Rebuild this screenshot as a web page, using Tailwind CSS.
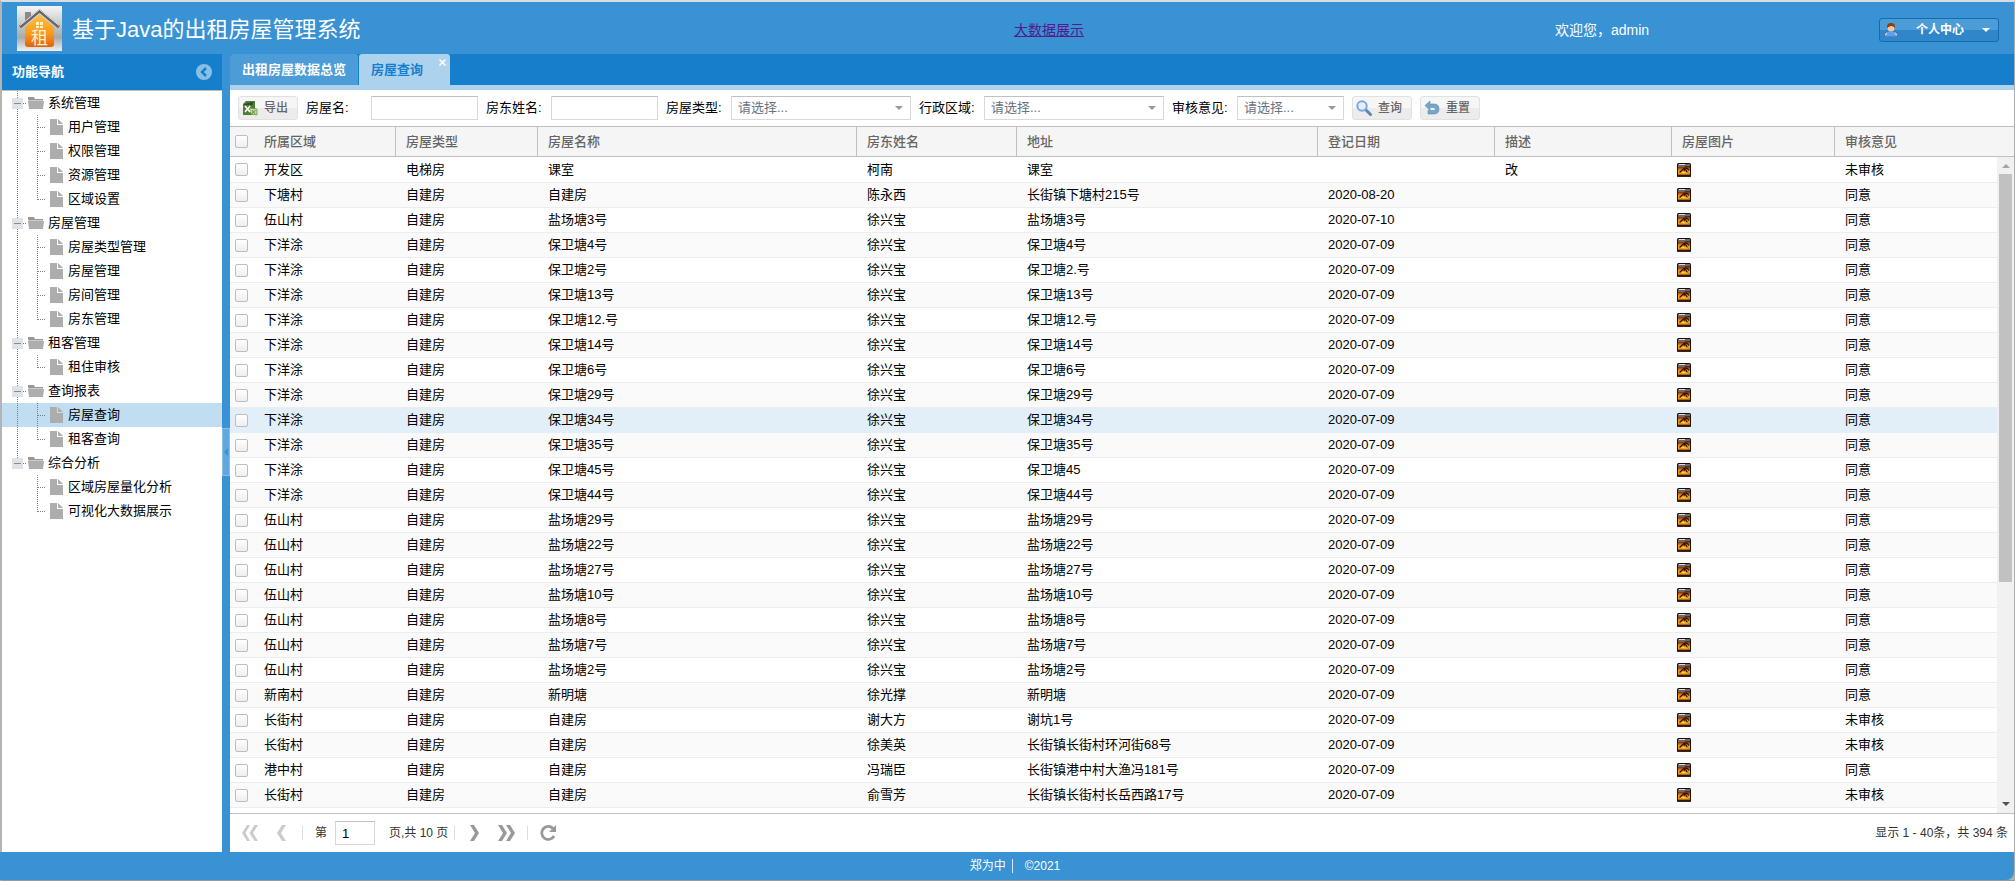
<!DOCTYPE html>
<html lang="zh-CN">
<head>
<meta charset="utf-8">
<title>基于Java的出租房屋管理系统</title>
<script src="https://cdn.jsdelivr.net/npm/@tailwindcss/browser@4"></script>
</head>
<body class="h-screen overflow-hidden bg-[#e3e3e3] font-['Liberation_Sans','Noto_Sans_CJK_SC',sans-serif] text-[13px] leading-4 text-black">
<svg class="absolute size-0" aria-hidden="true">
  <defs>
    <linearGradient id="g-logo" x1="0" y1="0" x2="0" y2="1"><stop offset="0" stop-color="#f5f5f5"/><stop offset=".7" stop-color="#a9a9a9"/><stop offset="1" stop-color="#f0f0f0"/></linearGradient>
    <linearGradient id="g-house" x1="0" y1="0" x2="0" y2="1"><stop offset="0" stop-color="#ffc04a"/><stop offset=".6" stop-color="#f79a1c"/><stop offset="1" stop-color="#e0620a"/></linearGradient>
    <linearGradient id="g-pic" x1="0" y1="0" x2="0" y2="1"><stop offset="0" stop-color="#7a2c08"/><stop offset=".4" stop-color="#f08a10"/><stop offset=".75" stop-color="#ffb01a"/><stop offset="1" stop-color="#a8480a"/></linearGradient>
  </defs>
  <symbol id="i-pic" viewBox="0 0 14 14">
    <rect x="0" y="0" width="14" height="14" rx="1.5" fill="#1c0f0a"/>
    <rect x="1" y="1" width="12" height="3" fill="#6f6a67"/><path d="M2 1h6v1H2z" fill="#dedbd8"/><path d="M8 3h5v2H7z" fill="#3d3734"/>
    <rect x="1" y="4" width="12" height="8" fill="url(#g-pic)"/>
    <path d="M2.500 9.500 7 5.500M6 10.500l2-4.500M7 5.500c2-1 4 0 5 2M8.500 6.500l2.500 4" stroke="#2a0f04" stroke-width="1.200" fill="none"/>
    <path d="M4.500 10l3-2.500v3.500zM9 10l1.500-1 .5 2z" fill="#ffe14d"/>
    <path d="M0 12.500h14v.500q0 1-1 1H1q-1 0-1-1z" fill="#3b2318"/>
  </symbol>
  <symbol id="i-folder" viewBox="0 0 16 12"><path d="M0 0h6l1 2h8v1.500H0z" fill="#989898"/><path d="M0 4h16l-1 8H1z" fill="#adadad"/></symbol>
  <symbol id="i-file" viewBox="0 0 13 16"><path d="M0 0h7v6h6v10H0z" fill="#adadad"/><path d="M8 0l5 5H8z" fill="#adadad"/></symbol>
  <symbol id="i-down" viewBox="0 0 8 4"><path d="M0 0h8L4 4z" fill="currentColor"/></symbol>
</svg>

<div class="flex h-full flex-col border-t-2 border-r border-b border-l-2 border-t-[#d7dde2] border-r-[#a9adb1] border-b-[#999] border-l-[#b4b4b4]">
  <header class="grid h-[52px] shrink-0 grid-cols-[1012fr_541fr_324fr_120px] items-center bg-[#3892d4] pr-[15px]">
    <div class="flex items-center gap-[10px] pl-[15px]">
      <svg class="size-[45px]" viewBox="0 0 45 45">
        <rect width="45" height="45" fill="url(#g-logo)"/>
        <path d="M8 6h6v6l-6 5z" fill="#8a8a8a"/>
        <path d="M8 21 22.500 8 37 21v17q0 3-3 3H11q-3 0-3-3z" fill="url(#g-house)"/>
        <path d="M3 21 22.500 5 42 21" fill="none" stroke="#666" stroke-width="3"/>
        <path d="M3 19.500 22.500 3.500 42 19.500" fill="none" stroke="#e8e8e8" stroke-width="1"/>
        <path d="M19 16h3v3h-3zM23 16h3v3h-3zM19 20h3v2h-3zM23 20h3v2h-3z" fill="#fff3c4"/>
        <text x="14" y="38" font-size="17" fill="#fff0d8" font-family="Noto Sans CJK SC">租</text>
      </svg>
      <h1 class="pt-1 text-[22px] leading-7 text-white">基于Java的出租房屋管理系统</h1>
    </div>
    <div class="pt-1"><a href="#" class="text-sm text-[#551a8b] underline">大数据展示</a></div>
    <div class="pt-1 text-sm text-white">欢迎您，admin</div>
    <button class="mt-1 flex h-6 items-center rounded-[3px] border border-[#126daf] bg-linear-to-b from-[#4b9cd7] from-50% to-[#3086c9] to-50% px-1 text-xs font-bold text-white">
      <svg class="size-[14px]" viewBox="0 0 14 14"><path d="M0 14q0-5 4-6h6q4 1 4 6z" fill="#5aa2ef" stroke="#2a5fb0" stroke-width=".800"/><path d="M1 12l2-2M13 12l-2-2" stroke="#f3c094" stroke-width="1.500"/><circle cx="7" cy="5" r="3.500" fill="#f6c79b"/><path d="M3 5q-.5-5 4-5t4 5Q9 2.500 7 3T3 5z" fill="#8b3d12"/></svg>
      <span class="flex-1 text-center">个人中心</span>
      <svg class="mr-1 h-1 w-2"><use href="#i-down"/></svg>
    </button>
  </header>

  <div class="flex min-h-0 flex-1">
    <aside class="flex w-[220px] shrink-0 flex-col bg-white">
      <div class="flex h-9 shrink-0 items-center justify-between bg-[#157fcc] px-[10px] font-bold text-white">
        <h2>功能导航</h2>
        <button aria-label="收起"><svg class="size-4" viewBox="0 0 16 16"><circle cx="8" cy="8" r="8" fill="#8abfe5"/><path d="M10 4 6 8l4 4" fill="none" stroke="#157fcc" stroke-width="2.500"/></svg></button>
      </div>
      <nav id="tree" class="border-t border-[#c0c0c0]"></nav>
    </aside>
    <div class="flex w-2 shrink-0 flex-col bg-[#3892d4] pt-[374px]">
      <button aria-label="折叠导航" class="flex h-12 w-2 items-center justify-center border border-[#88bee5] bg-[#60a8dd]"><svg class="h-2 w-1" viewBox="0 0 4 8"><path d="M4 0v8L0 4z" fill="#3892d4"/></svg></button>
    </div>

    <main class="flex min-w-0 flex-1 flex-col bg-white">
      <div class="flex h-9 shrink-0 gap-px border-b-[5px] border-[#add2ed] bg-[#157fcc] font-bold">
        <button class="rounded-t-[3px] bg-[#4b9cd7] px-3 text-white">出租房屋数据总览</button>
        <div class="flex rounded-t-[3px] bg-[#add2ed] pl-3 text-[#157fcc]">
          <button class="font-bold">房屋查询</button>
          <button aria-label="关闭" class="flex pt-[5px] pr-1 pl-4"><svg class="size-[7px]" viewBox="0 0 7 7"><path d="M.5.5l6 6M6.500.5l-6 6" stroke="#fff" stroke-width="1.500"/></svg></button>
        </div>
      </div>

      <form class="flex h-9 shrink-0 items-center gap-2 px-2">
        <button type="button" class="flex h-6 w-[60px] items-center gap-[6px] rounded-[3px] border border-[#e1e1e1] bg-linear-to-b from-[#f6f6f6] from-50% to-[#ececec] to-50% pl-1 text-xs font-medium text-[#666]">
          <svg class="size-[15px]" viewBox="0 0 15 15"><path d="M0 3 3 0h9v12l-3 2H0z" fill="#4d7d3a"/><path d="M1 3l9-2v3H1z" fill="#2f4f26"/><path d="M6 7l8 1v6l-6-1z" fill="#c8d8a4" stroke="#6a9a3c" stroke-width=".8"/><path d="M2 5l5 6M7 5l-5 6" stroke="#fff" stroke-width="1.600"/><path d="M9 9l3 4M12.500 9.500l-4 3" stroke="#4d8a2a" stroke-width=".9"/></svg>导出</button>
        <div class="flex items-center"><label for="house" class="w-[65px]">房屋名:</label><input id="house" class="h-6 w-[107px] border border-[#d9d9d9] border-t-[#c0c0c0] px-2 outline-none"></div>
        <div class="flex items-center"><label for="owner" class="w-[65px]">房东姓名:</label><input id="owner" class="h-6 w-[107px] border border-[#d9d9d9] border-t-[#c0c0c0] px-2 outline-none"></div>
        <div class="flex items-center"><label for="type" class="w-[65px]">房屋类型:</label><span class="relative"><select id="type" class="block h-6 w-[180px] appearance-none border border-[#d9d9d9] border-t-[#c0c0c0] bg-white pl-[6px] text-gray-500"><option>请选择...</option></select><svg class="pointer-events-none absolute top-[10px] right-2 h-1 w-2 text-[#999]"><use href="#i-down"/></svg></span></div>
        <div class="flex items-center"><label for="area" class="w-[65px]">行政区域:</label><span class="relative"><select id="area" class="block h-6 w-[180px] appearance-none border border-[#d9d9d9] border-t-[#c0c0c0] bg-white pl-[6px] text-gray-500"><option>请选择...</option></select><svg class="pointer-events-none absolute top-[10px] right-2 h-1 w-2 text-[#999]"><use href="#i-down"/></svg></span></div>
        <div class="flex items-center"><label for="audit" class="w-[65px]">审核意见:</label><span class="relative"><select id="audit" class="block h-6 w-[107px] appearance-none border border-[#d9d9d9] border-t-[#c0c0c0] bg-white pl-[6px] text-gray-500"><option>请选择...</option></select><svg class="pointer-events-none absolute top-[10px] right-2 h-1 w-2 text-[#999]"><use href="#i-down"/></svg></span></div>
        <button type="button" class="flex h-6 w-[60px] items-center gap-[6px] rounded-[3px] border border-[#e1e1e1] bg-linear-to-b from-[#f6f6f6] from-50% to-[#ececec] to-50% pl-[3px] text-xs font-medium text-[#666]">
          <svg class="size-4" viewBox="0 0 16 16"><path d="M9.500 9.500l5 5" stroke="#5f84b5" stroke-width="3" stroke-linecap="round"/><circle cx="6" cy="6" r="4.700" fill="#e3f0fc" stroke="#7ba7dc" stroke-width="2"/></svg>查询</button>
        <button type="button" class="flex h-6 w-[60px] items-center gap-[6px] rounded-[3px] border border-[#e1e1e1] bg-linear-to-b from-[#f6f6f6] from-50% to-[#ececec] to-50% pl-[3px] text-xs font-medium text-[#666]">
          <svg class="size-4" viewBox="0 0 16 16"><path d="M1 5.500 6 1v3h4q5 0 5 5t-5 5H4v-3.500h5.500q2 0 2-1.500t-2-1.500H6v3z" fill="#74a5c8" stroke="#5c8fb5" stroke-width=".6"/></svg>重置</button>
      </form>

      <div class="relative min-h-0 flex-1 overflow-hidden border-t border-b border-[#c0c0c0]">
        <table class="w-full table-fixed border-separate border-spacing-0 text-left">
          <colgroup><col class="w-6"><col class="w-[142px]"><col class="w-[142px]"><col class="w-[319px]"><col class="w-[160px]"><col class="w-[301px]"><col class="w-[177px]"><col class="w-[177px]"><col class="w-[163px]"><col></colgroup>
          <thead class="bg-[#f5f5f5] text-[#666]"><tr id="head" class="h-[30px]"></tr></thead>
          <tbody id="rows"></tbody>
        </table>
        <div class="absolute top-[30px] right-0 bottom-0 flex w-[17px] flex-col items-center bg-[#f1f1f1]">
          <svg class="mt-[7px] h-1 w-2 rotate-180 text-[#a3a3a3]"><use href="#i-down"/></svg>
          <div class="mt-[6px] h-[408px] w-[13px] bg-[#c1c1c1]"></div>
          <svg class="mt-auto mb-[7px] h-1 w-2 text-[#505050]"><use href="#i-down"/></svg>
        </div>
      </div>

      <div class="flex h-[38px] shrink-0 items-center pr-[6px] pl-3 text-xs text-[#333]">
        <button aria-label="首页"><svg class="h-4 w-4" viewBox="0 0 16 16"><path d="M8 0H5L0 8l5 8h3L3.500 8zM16 0h-3.500l-5 8 5 8H16l-5-8z" fill="#ccc"/></svg></button>
        <button aria-label="上一页" class="ml-[19px]"><svg class="h-4 w-[9px]" viewBox="0 0 9 16"><path d="M9 0H5L0 8l5 8h4L4 8z" fill="#ccc"/></svg></button>
        <span class="mr-3 ml-4 h-[14px] w-px bg-[#ddd]"></span>
        <label for="page">第</label>
        <input id="page" value="1" class="mr-[14px] ml-2 h-6 w-10 border border-[#d9d9d9] border-t-[#c0c0c0] px-[6px] text-[13px] text-black outline-none">
        <span>页,共 10 页</span>
        <span class="mr-[15px] ml-[6px] h-[14px] w-px bg-[#ddd]"></span>
        <button aria-label="下一页"><svg class="h-4 w-[9px]" viewBox="0 0 9 16"><path d="M0 0h4l5 8-5 8H0l5-8z" fill="#999"/></svg></button>
        <button aria-label="末页" class="ml-[19px]"><svg class="h-4 w-[17px]" viewBox="0 0 17 16"><path d="M0 0h4l5 8-5 8H0l5-8zM8 0h4l5 8-5 8H8l5-8z" fill="#999"/></svg></button>
        <span class="mr-3 ml-3 h-[14px] w-px bg-[#ddd]"></span>
        <button aria-label="刷新"><svg class="size-4" viewBox="0 0 16 16"><path d="M13 3.500A6.500 6.500 0 1 0 14 11" fill="none" stroke="#999" stroke-width="2.800"/><path d="M16 0v7H9z" fill="#999"/></svg></button>
        <span class="ml-auto">显示 1 - 40条，共 394 条</span>
      </div>
    </main>
  </div>

  <div class="-ml-[2px] shrink-0 bg-[#b0b0b0]">
    <footer class="flex h-7 items-center justify-center rounded-br-lg bg-[#3892d4] pl-4 text-xs text-white"><span>郑为中</span><span class="mr-3 ml-[6px] h-[14px] w-px bg-[#d5e7f5]"></span><span>©2021</span></footer>
  </div>
</div>

<script>
const tree = [
  ['系统管理', ['用户管理', '权限管理', '资源管理', '区域设置']],
  ['房屋管理', ['房屋类型管理', '房屋管理', '房间管理', '房东管理']],
  ['租客管理', ['租住审核']],
  ['查询报表', ['房屋查询', '租客查询']],
  ['综合分析', ['区域房屋量化分析', '可视化大数据展示']]
];
const dots = 'stroke="#7d7d7d" stroke-dasharray="1 1"';
document.getElementById('tree').innerHTML = tree.map(([name, kids], g) => {
  const last = g === tree.length - 1;
  const group = `<a href="#" class="flex h-6 items-center">
    <svg class="h-6 w-[26px]"><path d="M15.500 0V${last ? 12 : 24}M21 12.500h4" ${dots}/><rect x="10" y="7" width="11" height="11" fill="#dfe3e8"/><path d="M12 12.500h7" stroke="#8c8c8c"/></svg>
    <svg class="h-3 w-4"><use href="#i-folder"/></svg><span class="ml-1">${name}</span></a>`;
  return group + kids.map((k, i) => `<a href="#" class="flex h-6 items-center ${k === '房屋查询' ? 'bg-[#c1ddf1]' : ''}">
    <svg class="h-6 w-12"><path d="${last ? '' : 'M15.500 0V24'}M35.500 0V${i === kids.length - 1 ? 13 : 24}M36 12.500h8" ${dots}/></svg>
    <svg class="h-4 w-[13px]"><use href="#i-file"/></svg><span class="ml-[5px]">${k}</span></a>`).join('');
}).join('');

const box = label => `<input type="checkbox" aria-label="${label}" class="block size-[13px] appearance-none rounded-[2px] border border-[#bdbdbd] bg-linear-to-b from-white to-[#eee]">`;
document.getElementById('head').innerHTML =
  `<th class="border-b border-[#c0c0c0] p-0 pl-[5px]">${box('全选')}</th>` +
  ['所属区域', '房屋类型', '房屋名称', '房东姓名', '地址', '登记日期', '描述', '房屋图片', '审核意见']
    .map(h => `<th class="border-r border-b border-[#c0c0c0] px-[10px] py-0 font-medium last:border-r-0">${h}</th>`).join('');

const X = '徐兴宝', D = '2020-07-09', Z = '自建房', Y = '同意', N = '未审核';
const coast = (a, b = a) => ['下洋涂', Z, a, X, b, D, '', Y];
const hill = a => ['伍山村', Z, a, X, a, D, '', Y];
const rows = [
  ['开发区', '电梯房', '课室', '柯南', '课室', '', '改', N],
  ['下塘村', Z, Z, '陈永西', '长街镇下塘村215号', '2020-08-20', '', Y],
  ['伍山村', Z, '盐场塘3号', X, '盐场塘3号', '2020-07-10', '', Y],
  coast('保卫塘4号'), coast('保卫塘2号', '保卫塘2.号'), coast('保卫塘13号'), coast('保卫塘12.号'),
  coast('保卫塘14号'), coast('保卫塘6号'), coast('保卫塘29号'), coast('保卫塘34号'), coast('保卫塘35号'),
  coast('保卫塘45号', '保卫塘45'), coast('保卫塘44号'),
  hill('盐场塘29号'), hill('盐场塘22号'), hill('盐场塘27号'), hill('盐场塘10号'), hill('盐场塘8号'), hill('盐场塘7号'), hill('盐场塘2号'),
  ['新南村', Z, '新明塘', '徐光撑', '新明塘', D, '', Y],
  ['长街村', Z, Z, '谢大方', '谢坑1号', D, '', N],
  ['长街村', Z, Z, '徐美英', '长街镇长街村环河街68号', D, '', N],
  ['港中村', Z, Z, '冯瑞臣', '长街镇港中村大渔冯181号', D, '', Y],
  ['长街村', Z, Z, '俞雪芳', '长街镇长街村长岳西路17号', D, '', N]
];
document.getElementById('rows').innerHTML = rows.map((r, n) => {
  const tone = n === 10 ? 'bg-[#e2eff8] border-[#e2eff8]' : n % 2 ? 'bg-[#fafafa] border-[#ededed]' : 'border-[#ededed]';
  const td = t => `<td class="border-b border-inherit px-[10px] py-0">${t}</td>`;
  return `<tr class="h-[25px] first:h-[26px] ${tone}"><td class="border-b border-inherit p-0 pl-[5px]">${box('选择第' + (n + 1) + '行')}</td>` +
    r.slice(0, 7).map(td).join('') +
    `<td class="border-b border-inherit p-0 pl-[5px]"><svg class="size-[14px]" role="img" aria-label="房屋图片"><use href="#i-pic"/></svg></td>` + td(r[7]) + '</tr>';
}).join('');
</script>
</body>
</html>
